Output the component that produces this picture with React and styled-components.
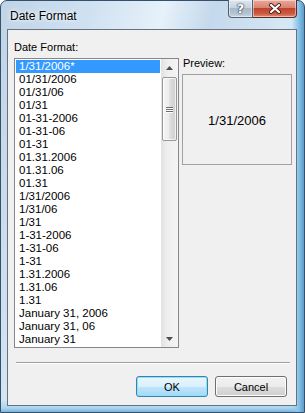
import React from 'react';
import styled, { createGlobalStyle } from 'styled-components';

const GlobalStyle = createGlobalStyle`
  html, body {
    margin: 0;
    padding: 0;
    background: #ffffff;
  }
  * {
    box-sizing: border-box;
  }
`;

const formats = [
  '1/31/2006*',
  '01/31/2006',
  '01/31/06',
  '01/31',
  '01-31-2006',
  '01-31-06',
  '01-31',
  '01.31.2006',
  '01.31.06',
  '01.31',
  '1/31/2006',
  '1/31/06',
  '1/31',
  '1-31-2006',
  '1-31-06',
  '1-31',
  '1.31.2006',
  '1.31.06',
  '1.31',
  'January 31, 2006',
  'January 31, 06',
  'January 31',
];

const Window = styled.div`
  width: 305px;
  height: 413px;
  display: flex;
  flex-direction: column;
  padding: 0 7px 6px 6px;
  border: 1px solid #34506a;
  border-radius: 7px 7px 0 0;
  background:
    linear-gradient(to right, rgba(255,255,255,0) 96%, #8cc7ee 98%, #5f9cc6 100%),
    linear-gradient(to bottom, rgba(255,255,255,0) 97%, #a9d6f2 99%, #7fb3d8 100%),
    linear-gradient(105deg, #bfd4e7 0%, #cfe1f1 22%, #e6f1fa 40%, #c4d9ec 52%, #d6e7f5 70%, #b9d1e7 100%);
  font-family: "Liberation Sans", Arial, sans-serif;
  font-size: 11px;
  color: #000;
`;

const TitleBar = styled.div`
  height: 28px;
  display: flex;
  align-items: flex-start;
`;

const Title = styled.div`
  flex: 1;
  padding: 8px 0 0 3px;
  font-size: 12px;
  line-height: 14px;
  text-shadow: 0 0 6px rgba(255,255,255,0.9), 0 0 3px rgba(255,255,255,0.9);
`;

const CaptionButtons = styled.div`
  display: flex;
  margin-top: -1px;
`;

const CaptionButton = styled.div`
  width: ${p => p.$w}px;
  height: 18px;
  display: flex;
  align-items: center;
  justify-content: center;
  border: 1px solid ${p => (p.$close ? '#5c2a22' : '#4f6273')};
  border-top: none;
  border-left-width: ${p => (p.$close ? 0 : 1)}px;
  border-radius: ${p => (p.$close ? '0 0 4px 0' : '0 0 0 4px')};
  background: ${p =>
    p.$close
      ? 'linear-gradient(to bottom, #e8aa9b 0%, #d98370 45%, #c1432d 50%, #cc5a43 80%, #e08f73 100%)'
      : 'linear-gradient(to bottom, #dde7f0 0%, #c6d3df 45%, #a9b9c8 50%, #b5c4d2 80%, #cbd8e3 100%)'};
  box-shadow: inset 0 0 0 1px rgba(255,255,255,0.45);
`;

const HelpGlyph = styled.span`
  font-family: "DejaVu Sans", sans-serif;
  font-weight: bold;
  font-size: 13px;
  line-height: 13px;
  color: #ffffff;
  text-shadow: 0 0 1px #2d3f52, 0 0 1px #2d3f52, 0 0 2px #2d3f52;
`;

const Client = styled.div`
  flex: 1;
  display: flex;
  flex-direction: column;
  border: 1px solid #67727e;
  background: #f0f0f0;
  padding: 10px 4px 0 6px;
`;

const Main = styled.div`
  display: flex;
  gap: 3px;
`;

const LeftColumn = styled.div`
  width: 165px;
  flex-shrink: 0;
  display: flex;
  flex-direction: column;
`;

const RightColumn = styled.div`
  width: 110px;
  flex-shrink: 0;
  display: flex;
  flex-direction: column;
  padding-top: 16px;
`;

const Label = styled.div`
  line-height: 15px;
  margin-bottom: 3px;
  padding-left: ${p => p.$indent || 0}px;
`;

const ListBox = styled.div`
  height: 290px;
  display: flex;
  border: 1px solid #828790;
  background: #ffffff;
`;

const Items = styled.div`
  flex: 1;
  padding: 0 1px;
`;

const Item = styled.div`
  height: 13px;
  line-height: 13px;
  padding-left: 3px;
  white-space: nowrap;
  font-size: 11.5px;
  color: ${p => (p.$selected ? '#ffffff' : '#000000')};
  background: ${p => (p.$selected ? '#3399ff' : 'transparent')};
  margin-top: ${p => (p.$selected ? '1px' : '0')};
`;

const ScrollBar = styled.div`
  width: 17px;
  display: flex;
  flex-direction: column;
  background: linear-gradient(to right, #e2e2e2 0%, #efefef 40%, #f4f4f4 100%);
`;

const ArrowButton = styled.div`
  height: 17px;
  display: flex;
  align-items: center;
  justify-content: center;
`;

const Track = styled.div`
  flex: 1;
  padding: 1px 1px 0 1px;
`;

const Thumb = styled.div`
  height: 64px;
  display: flex;
  flex-direction: column;
  align-items: center;
  justify-content: center;
  gap: 1px;
  border: 1px solid #979797;
  border-radius: 2px;
  background: linear-gradient(to right, #f6f6f6 0%, #ececec 45%, #dcdcdc 55%, #cfcfcf 100%);
  box-shadow: inset 0 0 0 1px rgba(255,255,255,0.7);
`;

const Grip = styled.div`
  width: 7px;
  height: 1px;
  background: #6b6b6b;
  box-shadow: 0 1px 0 #ffffff;
`;

const PreviewBox = styled.div`
  height: 91px;
  border: 1px solid #a0a0a0;
  display: flex;
  align-items: center;
  justify-content: center;
  font-size: 13px;
  padding-top: 2px;
`;

const Separator = styled.div`
  height: 2px;
  margin: 14px 0 0 2px;
  width: 274px;
  border-top: 1px solid #a0a0a0;
  border-bottom: 1px solid #ffffff;
`;

const ButtonRow = styled.div`
  display: flex;
  justify-content: flex-end;
  gap: 7px;
  margin-top: 12px;
  padding-right: 5px;
`;

const Button = styled.div`
  width: 72px;
  height: 21px;
  display: flex;
  align-items: center;
  justify-content: center;
  border: 1px solid ${p => (p.$default ? '#3c7fb1' : '#707070')};
  border-radius: 3px;
  background: ${p =>
    p.$default
      ? 'linear-gradient(to bottom, #eaf6fd 0%, #d9f0fc 50%, #bee6fd 50%, #a7d9f5 100%)'
      : 'linear-gradient(to bottom, #f2f2f2 0%, #ebebeb 50%, #dddddd 50%, #cfcfcf 100%)'};
  box-shadow: inset 0 0 0 1px ${p => (p.$default ? '#8ce2f8' : '#fcfcfc')};
`;

function ArrowIcon({ down }) {
  return (
    <svg width="7" height="4" viewBox="0 0 7 4">
      <path d={down ? 'M0 0 L7 0 L3.5 4 Z' : 'M0 4 L7 4 L3.5 0 Z'} fill="#4d4d4d" />
    </svg>
  );
}

function CloseIcon() {
  return (
    <svg width="14" height="11" viewBox="0 0 14 11">
      <path d="M3 2 L11 9 M11 2 L3 9" stroke="#4a1f18" strokeWidth="4" strokeLinecap="round" />
      <path d="M3 2 L11 9 M11 2 L3 9" stroke="#ffffff" strokeWidth="2.2" strokeLinecap="round" />
    </svg>
  );
}

export default function App() {
  return (
    <>
      <GlobalStyle />
      <Window>
        <TitleBar>
          <Title>Date Format</Title>
          <CaptionButtons>
            <CaptionButton $w={25}>
              <HelpGlyph>?</HelpGlyph>
            </CaptionButton>
            <CaptionButton $w={44} $close>
              <CloseIcon />
            </CaptionButton>
          </CaptionButtons>
        </TitleBar>
        <Client>
          <Main>
            <LeftColumn>
              <Label>Date Format:</Label>
              <ListBox>
                <Items>
                  {formats.map((f, i) => (
                    <Item key={i} $selected={i === 0}>{f}</Item>
                  ))}
                </Items>
                <ScrollBar>
                  <ArrowButton><ArrowIcon /></ArrowButton>
                  <Track>
                    <Thumb>
                      <Grip />
                      <Grip />
                      <Grip />
                    </Thumb>
                  </Track>
                  <ArrowButton><ArrowIcon down /></ArrowButton>
                </ScrollBar>
              </ListBox>
            </LeftColumn>
            <RightColumn>
              <Label $indent={1}>Preview:</Label>
              <PreviewBox>1/31/2006</PreviewBox>
            </RightColumn>
          </Main>
          <Separator />
          <ButtonRow>
            <Button $default>OK</Button>
            <Button>Cancel</Button>
          </ButtonRow>
        </Client>
      </Window>
    </>
  );
}
